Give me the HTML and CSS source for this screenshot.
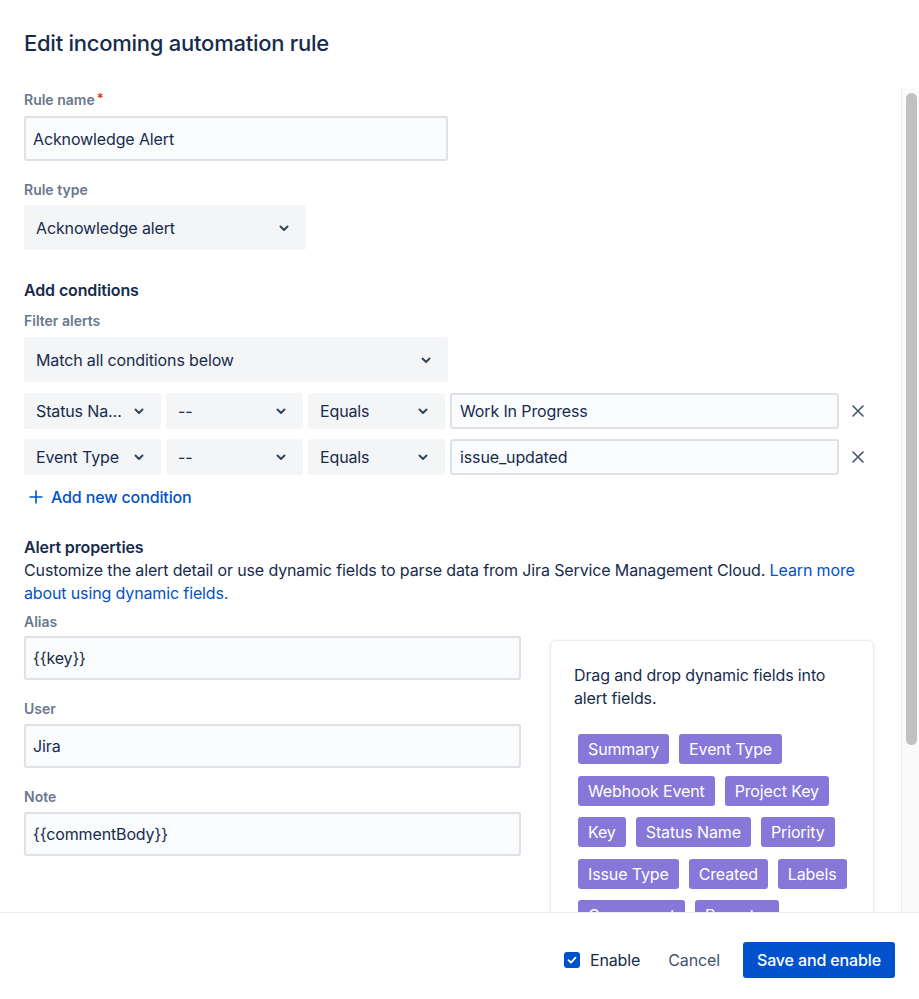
FILE: index.html
```html
<!DOCTYPE html>
<html lang="en">

<head>
    <meta charset="UTF-8">
    <meta name="viewport" content="width=device-width, initial-scale=1.0">
    <title>Edit incoming automation rule</title>

    <link rel="stylesheet" href="styles.css">
</head>

<body>
    <div class="modal">
        <div class="modal-header">
            <h1>Edit incoming automation rule</h1>
        </div>

        <div class="scroll-wrap">
            <div class="modal-body">
                <label class="label first">Rule name<span class="req">*</span></label>
                <div class="text-field w-424">Acknowledge Alert</div>

                <label class="label">Rule type</label>
                <div class="select w-282">
                    <span class="select-text">Acknowledge alert</span>
                    <svg class="chevron" width="12" height="12" viewBox="0 0 12 12"><polyline points="2.5,4.5 6,8 9.5,4.5" /></svg>
                </div>

                <h2 class="section-title conditions">Add conditions</h2>
                <label class="label small-gap">Filter alerts</label>
                <div class="select w-424">
                    <span class="select-text">Match all conditions below</span>
                    <svg class="chevron" width="12" height="12" viewBox="0 0 12 12"><polyline points="2.5,4.5 6,8 9.5,4.5" /></svg>
                </div>

                <div class="cond-row">
                    <div class="select cond">
                        <span class="select-text">Status Name</span>
                        <svg class="chevron" width="12" height="12" viewBox="0 0 12 12"><polyline points="2.5,4.5 6,8 9.5,4.5" /></svg>
                    </div>
                    <div class="select cond">
                        <span class="select-text">--</span>
                        <svg class="chevron" width="12" height="12" viewBox="0 0 12 12"><polyline points="2.5,4.5 6,8 9.5,4.5" /></svg>
                    </div>
                    <div class="select cond">
                        <span class="select-text">Equals</span>
                        <svg class="chevron" width="12" height="12" viewBox="0 0 12 12"><polyline points="2.5,4.5 6,8 9.5,4.5" /></svg>
                    </div>
                    <div class="text-field cond-value">Work In Progress</div>
                    <div class="remove">
                        <svg width="14" height="14" viewBox="0 0 14 14"><path d="M2 2 L12 12 M12 2 L2 12" /></svg>
                    </div>
                </div>
                <div class="cond-row">
                    <div class="select cond">
                        <span class="select-text">Event Type</span>
                        <svg class="chevron" width="12" height="12" viewBox="0 0 12 12"><polyline points="2.5,4.5 6,8 9.5,4.5" /></svg>
                    </div>
                    <div class="select cond">
                        <span class="select-text">--</span>
                        <svg class="chevron" width="12" height="12" viewBox="0 0 12 12"><polyline points="2.5,4.5 6,8 9.5,4.5" /></svg>
                    </div>
                    <div class="select cond">
                        <span class="select-text">Equals</span>
                        <svg class="chevron" width="12" height="12" viewBox="0 0 12 12"><polyline points="2.5,4.5 6,8 9.5,4.5" /></svg>
                    </div>
                    <div class="text-field cond-value">issue_updated</div>
                    <div class="remove">
                        <svg width="14" height="14" viewBox="0 0 14 14"><path d="M2 2 L12 12 M12 2 L2 12" /></svg>
                    </div>
                </div>

                <a class="add-cond">
                    <svg width="14" height="14" viewBox="0 0 14 14"><path d="M7 0.5 V13.5 M0.5 7 H13.5" /></svg>
                    Add new condition
                </a>

                <h2 class="section-title props">Alert properties</h2>
                <p class="desc">Customize the alert detail or use dynamic fields to parse data from Jira Service Management Cloud. <a class="link">Learn more about using dynamic fields.</a></p>

                <div class="props-grid">
                    <div class="props-left">
                        <label class="label alias">Alias</label>
                        <div class="text-field prop">{{key}}</div>

                        <label class="label">User</label>
                        <div class="text-field prop">Jira</div>

                        <label class="label">Note</label>
                        <div class="text-field prop">{{commentBody}}</div>
                    </div>

                    <div class="fields-card">
                        <p>Drag and drop dynamic fields into alert fields.</p>
                        <div class="tags">
                            <span class="tag">Summary</span>
                            <span class="tag">Event Type</span>
                            <span class="tag">Webhook Event</span>
                            <span class="tag">Project Key</span>
                            <span class="tag">Key</span>
                            <span class="tag">Status Name</span>
                            <span class="tag">Priority</span>
                            <span class="tag">Issue Type</span>
                            <span class="tag">Created</span>
                            <span class="tag">Labels</span>
                            <span class="tag">Component</span>
                            <span class="tag">Reporter</span>
                            <span class="tag">Assignee</span>
                            <span class="tag">Description</span>
                            <span class="tag">Updated</span>
                            <span class="tag">Resolution</span>
                        </div>
                    </div>
                </div>
            </div>

            <div class="scrollbar">
                <div class="thumb"></div>
            </div>
        </div>

        <div class="modal-footer">
            <label class="checkbox">
                <span class="box">
                    <svg width="16" height="16" viewBox="0 0 16 16"><polyline points="4.5,8.2 7,10.6 11.5,5.6" /></svg>
                </span>
                Enable
            </label>
            <button class="btn subtle">Cancel</button>
            <button class="btn primary">Save and enable</button>
        </div>
    </div>
</body>

</html>
```

FILE: styles.css
```css
* {
    padding: 0;
    margin: 0;
    box-sizing: border-box;
}

body {
    font-family: Inter, "Liberation Sans", Arial, sans-serif;
    font-size: 16px;
    letter-spacing: -0.13px;
    color: #172B4D;
    background: #fff;
}

.modal {
    width: 919px;
    height: 999px;
    display: flex;
    flex-direction: column;
}

.modal-header {
    height: 88px;
    padding: 29px 24px 0;
}

.modal-header h1 {
    font-size: 22px;
    line-height: 28px;
    font-weight: 500;
    color: #172B4D;
    letter-spacing: -0.25px;
}

/* scrolling area + drawn scrollbar */
.scroll-wrap {
    flex: 1;
    min-height: 0;
    display: flex;
}

.modal-body {
    flex: 1;
    overflow: hidden;
    padding: 2px 24px 24px;
}

.scrollbar {
    width: 18px;
    background: #FAFAFA;
    border-left: 1px solid #E8E8E8;
    padding: 5px 2px 0 4px;
}

.scrollbar .thumb {
    height: 652px;
    background: #C1C1C1;
    border-radius: 6px;
}

.label {
    display: block;
    font-size: 14px;
    line-height: 16px;
    font-weight: 600;
    letter-spacing: 0;
    color: #6B778C;
    margin: 21px 0 7px;
}

.label.first {
    margin-top: 0;
    margin-bottom: 8px;
}

.label.small-gap {
    margin-top: 13px;
    margin-bottom: 8px;
}

.label.alias {
    margin-top: 9px;
    margin-bottom: 6px;
}

.req {
    color: #DE350B;
    font-size: 13px;
    margin-left: 2px;
    vertical-align: 2px;
}

.text-field {
    height: 45px;
    border: 2px solid #DFE1E6;
    background: #FAFBFC;
    border-radius: 3px;
    padding: 0 7px;
    display: flex;
    align-items: center;
    font-size: 16px;
    color: #172B4D;
    white-space: nowrap;
}

.text-field.prop {
    height: 44px;
}

.w-424 {
    width: 424px;
}

.w-282 {
    width: 282px;
}

.select {
    height: 45px;
    background: #F4F5F7;
    border-radius: 3px;
    padding: 0 34px 0 12px;
    display: flex;
    align-items: center;
    position: relative;
    color: #172B4D;
}

.select-text {
    overflow: hidden;
    text-overflow: ellipsis;
    white-space: nowrap;
}

.chevron {
    position: absolute;
    right: 16px;
    top: 50%;
    margin-top: -6px;
}

.chevron polyline {
    fill: none;
    stroke: #344563;
    stroke-width: 2;
    stroke-linecap: round;
    stroke-linejoin: round;
}

.section-title {
    font-size: 16px;
    line-height: 20px;
    font-weight: 600;
    color: #172B4D;
}

.section-title.conditions {
    margin-top: 30px;
}

.section-title.props {
    margin-top: 30px;
}

/* condition rows */
.cond-row {
    display: flex;
    align-items: center;
    margin-top: 11px;
}

.cond-row + .cond-row {
    margin-top: 10px;
}

.select.cond {
    width: 137px;
    height: 36px;
    margin-right: 5px;
}

.text-field.cond-value {
    width: 389px;
    height: 36px;
    padding: 0 8px;
}

.remove {
    width: 28px;
    margin-left: 5px;
    display: flex;
    justify-content: center;
}

.remove path {
    stroke: #42526E;
    stroke-width: 1.6;
    stroke-linecap: round;
}

.add-cond {
    display: flex;
    align-items: center;
    margin-top: 12px;
    height: 20px;
    padding-left: 5px;
    color: #0052CC;
    font-size: 16px;
    font-weight: 500;
}

.add-cond svg {
    margin-right: 8px;
}

.add-cond path {
    stroke: #0052CC;
    stroke-width: 1.6;
}

.desc {
    margin-top: 2px;
    line-height: 23px;
    font-size: 16px;
    color: #172B4D;
}

.link {
    color: #0052CC;
}

.props-grid {
    display: grid;
    grid-template-columns: 497px 324px;
    column-gap: 29px;
    align-items: start;
}

.fields-card {
    margin-top: 35px;
    border: 1px solid #EBECF0;
    border-radius: 6px;
    box-shadow: 0 1px 4px rgba(9, 30, 66, 0.08);
    padding: 23px 23px 26px;
}

.fields-card p {
    line-height: 23px;
    color: #172B4D;
}

.tags {
    display: flex;
    flex-wrap: wrap;
    gap: 11.5px 10px;
    margin-top: 24px;
    padding-left: 4px;
}

.tag {
    height: 30px;
    line-height: 30px;
    padding: 0 10px;
    background: #8777D9;
    color: #fff;
    border-radius: 3px;
    white-space: nowrap;
}

/* footer */
.modal-footer {
    height: 87px;
    border-top: 1px solid #EBECF0;
    display: flex;
    justify-content: flex-end;
    align-items: flex-start;
    padding: 29px 24px 0;
}

.checkbox {
    display: flex;
    align-items: center;
    height: 36px;
    color: #172B4D;
}

.checkbox .box {
    width: 16px;
    height: 16px;
    border-radius: 3px;
    background: #0052CC;
    margin-right: 10px;
    display: flex;
}

.checkbox polyline {
    fill: none;
    stroke: #fff;
    stroke-width: 1.8;
    stroke-linecap: round;
    stroke-linejoin: round;
}

.btn {
    height: 36px;
    border: none;
    border-radius: 3px;
    font-family: Inter, "Liberation Sans", Arial, sans-serif;
    font-size: 16px;
    letter-spacing: -0.13px;
    padding: 0 14px;
    cursor: pointer;
}

.btn.subtle {
    background: none;
    color: #42526E;
    margin-left: 16px;
    padding: 0 12px;
}

.btn.primary {
    background: #0052CC;
    color: #fff;
    font-weight: 500;
    margin-left: 11px;
}
```
